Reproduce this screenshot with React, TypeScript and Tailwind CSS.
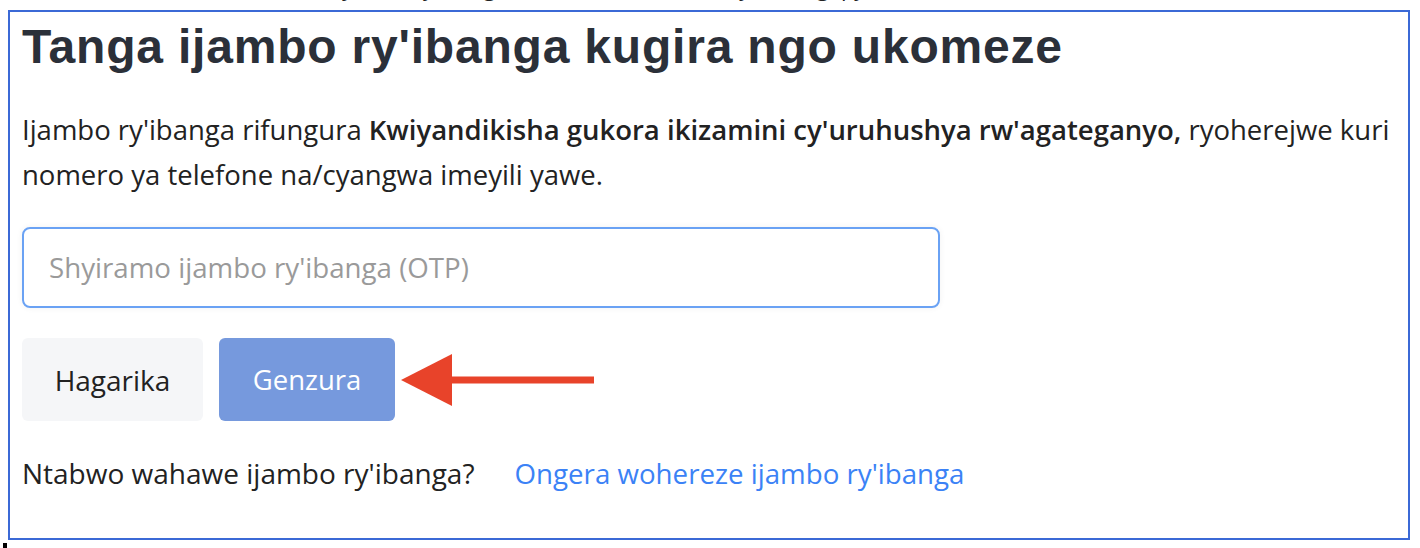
import React from "react";

export default function App() {
  return (
    <div className="w-[1420px] h-[548px] bg-white overflow-hidden relative" style={{ fontFamily: "'Open Sans', sans-serif" }}>
      <div className="h-[10px] overflow-hidden pl-[262px]">
        <div className="-mt-[26px] text-[22px] leading-[26px] text-[#222]">
          Andika ijambo ry'ibanga wahawe kuri telefone yawe, ugapya
        </div>
      </div>
      <div className="ml-[8px] w-[1402px] h-[530px] border-2 border-[#3b69d6] pl-[12px] pr-[8px]">
        <h1 className="mt-[8px] text-[48px] leading-[54px] font-bold text-[#2b3039] tracking-[0.8px]" style={{ fontFamily: "'Liberation Sans', Arial, sans-serif" }}>
          Tanga ijambo ry'ibanga kugira ngo ukomeze
        </h1>
        <p className="mt-[33px] text-[27.5px] leading-[45px] text-[#222] whitespace-nowrap">
          Ijambo ry'ibanga rifungura <span className="font-semibold">Kwiyandikisha gukora ikizamini cy'uruhushya rw'agateganyo,</span> ryoherejwe kuri
          <br />
          nomero ya telefone na/cyangwa imeyili yawe.
        </p>
        <div className="mt-[30px] w-[918px] h-[81px] rounded-[8px] border-2 border-[#6aa2f4] shadow-[0_0_6px_rgba(0,0,0,0.06)] flex items-center pl-[25px]">
          <span className="text-[27.7px] text-[#9a9a9a]">Shyiramo ijambo ry'ibanga (OTP)</span>
        </div>
        <div className="mt-[30px] flex items-center">
          <div className="w-[181px] h-[83px] rounded-[6px] bg-[#f5f6f8] flex items-center justify-center text-[28px] text-[#222]">
            Hagarika
          </div>
          <div className="ml-[16px] w-[176px] h-[83px] rounded-[6px] bg-[#7699dd] flex items-center justify-center text-[27.5px] text-white">
            Genzura
          </div>
          <svg className="ml-[6px]" width="196" height="60" viewBox="0 0 196 60">
            <polygon points="0,30 51,4 51,56" fill="#e8432a" />
            <rect x="50" y="26.5" width="143" height="7" fill="#e8432a" />
          </svg>
        </div>
        <div className="mt-[32px] flex items-center text-[28px] leading-[40px]">
          <span className="text-[#222]">Ntabwo wahawe ijambo ry'ibanga?</span>
          <span className="ml-[40px] text-[#3b82f6] text-[27.7px]">Ongera wohereze ijambo ry'ibanga</span>
        </div>
      </div>
      <div className="absolute left-[3px] top-[543px] w-[4px] h-[5px] bg-black" />
    </div>
  );
}
